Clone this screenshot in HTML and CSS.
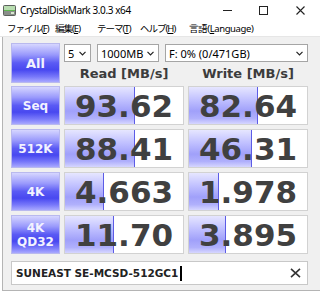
FILE: index.html
```html
<!DOCTYPE html>
<html lang="ja">
<head>
    <meta charset="UTF-8">
    <title>CrystalDiskMark 3.0.3 x64</title>
    <link rel="stylesheet" href="styles.css">
</head>
<body>

<div class="window">
    <div class="titlebar">
        <svg class="app-icon" width="13" height="11" viewBox="0 0 13 11">
            <rect x="0.5" y="0.5" width="12" height="10" rx="1" fill="#8a8f8a" stroke="#5d625d"/>
            <rect x="1" y="1" width="11" height="4" fill="#b8ddb0"/>
            <rect x="1" y="5" width="11" height="1" fill="#5fb84f"/>
            <rect x="8" y="7" width="3" height="2" fill="#d8e8d0"/>
        </svg>
        <span class="title">CrystalDiskMark 3.0.3 x64</span>
        <div class="controls">
            <span class="ctl-min"></span>
            <span class="ctl-max"></span>
            <svg width="9" height="9" viewBox="0 0 9 9"><path d="M0.5 0.5L8.5 8.5M8.5 0.5L0.5 8.5" stroke="#222" stroke-width="1.1"/></svg>
        </div>
    </div>

    <div class="menubar">
        <span class="menu m1">ファイル(<u>F</u>)</span>
        <span class="menu m2">編集(<u>E</u>)</span>
        <span class="menu m3">テーマ(<u>T</u>)</span>
        <span class="menu m4">ヘルプ(<u>H</u>)</span>
        <span class="menu m5">言語(<u>L</u>anguage)</span>
    </div>

    <div class="panel">
        <div class="top">
            <div class="btn btn-all">All</div>
            <div class="opts">
                <div class="selects">
                    <div class="select s-count">5 <svg width="7" height="5" viewBox="0 0 7 5"><path d="M0.5 0.8L3.5 3.8L6.5 0.8" fill="none" stroke="#222" stroke-width="1.2"/></svg></div>
                    <div class="select s-size">1000MB <svg width="7" height="5" viewBox="0 0 7 5"><path d="M0.5 0.8L3.5 3.8L6.5 0.8" fill="none" stroke="#222" stroke-width="1.2"/></svg></div>
                    <div class="select s-drive">F: 0% (0/471GB) <svg width="7" height="5" viewBox="0 0 7 5"><path d="M0.5 0.8L3.5 3.8L6.5 0.8" fill="none" stroke="#222" stroke-width="1.2"/></svg></div>
                </div>
                <div class="heads">
                    <div>Read [MB/s]</div>
                    <div>Write [MB/s]</div>
                </div>
            </div>
        </div>

        <div class="results">
            <div class="btn">Seq</div>
            <div class="cell"><div class="bar" style="width:70px"></div><span>93.62</span></div>
            <div class="cell"><div class="bar" style="width:69px"></div><span>82.64</span></div>

            <div class="btn">512K</div>
            <div class="cell"><div class="bar" style="width:70px"></div><span>88.41</span></div>
            <div class="cell"><div class="bar" style="width:63px"></div><span>46.31</span></div>

            <div class="btn">4K</div>
            <div class="cell"><div class="bar" style="width:39px"></div><span>4.663</span></div>
            <div class="cell"><div class="bar" style="width:30px"></div><span>1.978</span></div>

            <div class="btn btn-two">4K<br>QD32</div>
            <div class="cell"><div class="bar" style="width:49px"></div><span>11.70</span></div>
            <div class="cell"><div class="bar" style="width:37px"></div><span>3.895</span></div>
        </div>

        <div class="comment">
            <span class="comment-text">SUNEAST SE-MCSD-512GC1</span><span class="caret"></span>
            <svg class="clear" width="11" height="10" viewBox="0 0 11 10"><path d="M1 0.8L10 9.2M10 0.8L1 9.2" stroke="#333" stroke-width="1.6"/></svg>
        </div>
    </div>
</div>

</body>
</html>
```

FILE: styles.css
```css
body {
    margin: 0;
    padding: 0;
    background-color: #ffffff;
    font-family: "Noto Sans", "Noto Sans CJK JP", sans-serif;
    color: #000;
}
.window {
    width: 320px;
    height: 292px;
    overflow: hidden;
    background-color: #ffffff;
}
.titlebar {
    height: 19px;
    display: flex;
    align-items: center;
    padding-left: 3px;
}
.app-icon {
    margin-right: 4px;
    margin-top: 1px;
}
.title {
    font-size: 10px;
    letter-spacing: -0.4px;
}
.controls {
    margin-left: auto;
    display: flex;
    align-items: center;
    padding-top: 1px;
}
.ctl-min {
    width: 9px;
    height: 1px;
    background-color: #222;
    margin-right: 27px;
}
.ctl-max {
    width: 7px;
    height: 7px;
    border: 1px solid #222;
    margin-right: 28px;
}
.controls svg {
    margin-right: 15px;
}
.menubar {
    height: 17px;
    border-bottom: 1px solid #e6e6e6;
    display: flex;
    align-items: center;
    padding-left: 7px;
    font-size: 9.5px;
}
.menu {
    white-space: nowrap;
    letter-spacing: -1px;
}
.menu u {
    text-decoration: underline;
}
.m1 { width: 48px; }
.m2 { width: 42px; }
.m3 { width: 43px; }
.m4 { width: 49px; }
.m5 { letter-spacing: -0.4px; }
.panel {
    height: 254px;
    box-sizing: border-box;
    margin-left: 2px;
    border-left: 1px solid #b4b4b4;
    border-bottom: 1px solid #b4b4b4;
    background-color: #f0f0f0;
    padding: 6px 0 0 8px;
}
.top {
    display: grid;
    grid-template-columns: 49px 244px;
    column-gap: 4px;
    height: 40px;
    margin-bottom: 3px;
}
.btn {
    box-sizing: border-box;
    border: 1px solid #b9b9ee;
    background: linear-gradient(#d6d6ff 0%, #9a9afc 28%, #5a5af4 50%, #4848f0 68%, #7878fa 86%, #a8a8ff 100%);
    color: #f2f2ff;
    font-family: "DejaVu Sans", sans-serif;
    font-weight: bold;
    font-size: 12px;
    display: flex;
    align-items: center;
    justify-content: center;
    text-align: center;
    line-height: 14px;
}
.btn-all {
    font-size: 13px;
    padding-top: 2px;
}
.opts {
    display: flex;
    flex-direction: column;
}
.selects {
    display: flex;
    gap: 6px;
    height: 18px;
    margin-top: 1px;
}
.select {
    box-sizing: border-box;
    height: 18px;
    border: 1px solid #a5a5a5;
    background-color: #fff;
    font-size: 11px;
    display: flex;
    align-items: center;
    justify-content: space-between;
    padding: 0 4px 0 3px;
}
.s-count { width: 27px; }
.s-size { width: 62px; }
.s-drive { width: 143px; }
.heads {
    display: grid;
    grid-template-columns: 120px 120px;
    column-gap: 4px;
    flex: 1;
    align-items: center;
}
.heads div {
    text-align: center;
    font-family: "DejaVu Sans", sans-serif;
    font-weight: bold;
    font-size: 13px;
    color: #3c3c3c;
    padding-top: 1px;
}
.results {
    display: grid;
    grid-template-columns: 49px 120px 120px;
    grid-auto-rows: 39px;
    gap: 4px;
}
.cell {
    position: relative;
    box-sizing: border-box;
    border: 1px solid #d2d2d2;
    background-color: #fff;
    display: flex;
    align-items: center;
    justify-content: center;
}
.bar {
    position: absolute;
    left: 0;
    top: 0;
    bottom: 0;
    box-sizing: border-box;
    border-right: 1px solid #5c5ce6;
    background: linear-gradient(#e6e6ff 0%, #c0c0ff 35%, #a0a0fa 65%, #b0b0fc 85%, #d6d6ff 100%);
}
.cell span {
    position: relative;
    font-family: "DejaVu Sans", sans-serif;
    font-weight: bold;
    font-size: 31px;
    color: #404040;
    padding-top: 1px;
}
.comment {
    box-sizing: border-box;
    width: 297px;
    height: 24px;
    margin-top: 7px;
    border: 1px solid #c8c8c8;
    background-color: #fff;
    display: flex;
    align-items: center;
    padding-left: 4px;
    padding-right: 6px;
}
.comment-text {
    font-family: "DejaVu Sans", sans-serif;
    font-weight: bold;
    font-size: 10.5px;
    color: #222;
}
.caret {
    width: 2px;
    height: 15px;
    background-color: #000;
    margin-left: 2px;
}
.clear {
    margin-left: auto;
}
```
